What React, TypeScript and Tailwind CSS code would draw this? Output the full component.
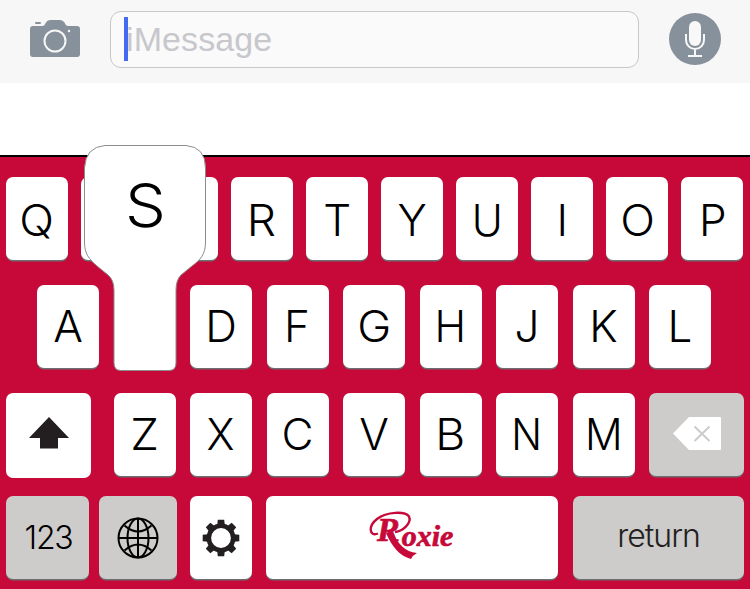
import type { ReactNode } from "react";

const letterKey =
  "flex h-[83px] w-[62px] shrink-0 items-center justify-center rounded-[7px] bg-white text-[44px] leading-none font-light text-black shadow-[0_1.5px_0_#6d6e70]";

type Glyph = { char: string; scale?: number; dx?: number; dy?: number };

function Letter({ char, scale = 1, dx = 0, dy = 0 }: Glyph) {
  return (
    <span className="block" style={{ transform: `translate(${dx}px, ${dy}px) scaleX(${scale})` }}>
      {char}
    </span>
  );
}

const topRow: Glyph[] = [
  { char: "Q", scale: 1.04 }, { char: "W" }, { char: "E" }, { char: "R", scale: 1.05, dx: -0.5 }, { char: "T" },
  { char: "Y" }, { char: "U", scale: 0.96 }, { char: "I" }, { char: "O", scale: 1.04 }, { char: "P", dx: 0.5 },
];
const homeRow: Glyph[] = [
  { char: "A" }, { char: "S" }, { char: "D" }, { char: "F", dx: -0.5 }, { char: "G", scale: 1.04 },
  { char: "H", scale: 0.97 }, { char: "J" }, { char: "K" }, { char: "L" },
];
const bottomRow: Glyph[] = [
  { char: "Z", scale: 1.05 }, { char: "X", scale: 0.96 }, { char: "C" }, { char: "V" },
  { char: "B", scale: 1.05 }, { char: "N", scale: 0.92 }, { char: "M", scale: 0.95 },
];
const covered = ["W", "E"];

function GrayKey({ className, children }: { className: string; children: ReactNode }) {
  return (
    <div className={`flex h-[83px] shrink-0 items-center justify-center rounded-[7px] bg-[#cdccca] shadow-[0_1.5px_0_#6d6e70] ${className}`}>
      {children}
    </div>
  );
}

function Camera() {
  return (
    <svg className="h-[38px] w-[50px]" viewBox="0 0 50 38">
      <path d="M3 6H13Q15 5 16 2.5Q17 0 20 0H30Q33 0 34.5 2.5Q36 6 38 6H47Q50 6 50 9V34Q50 37 47 37H3Q0 37 0 34V9Q0 6 3 6Z" fill="#87919b" />
      <rect x="5" y="2" width="6" height="2" rx="1" fill="#87919b" />
      <circle cx="25" cy="21" r="10.5" fill="none" stroke="#f7f7f7" strokeWidth="2" />
      <circle cx="39" cy="11" r="1.2" fill="#f7f7f7" />
    </svg>
  );
}

function Microphone() {
  return (
    <svg className="h-[52px] w-[52px]" viewBox="0 0 52 52">
      <circle cx="26" cy="26" r="26" fill="#87919b" />
      <rect x="20" y="8" width="12" height="25" rx="6" fill="#f8f8f8" />
      <path d="M17 21V27A9 9 0 0 0 35 27V21M26 36V43M19 43H33" fill="none" stroke="#f8f8f8" strokeWidth="2" />
    </svg>
  );
}

function Globe() {
  return (
    <svg className="h-[42px] w-[42px]" viewBox="0 0 42 42" fill="none" stroke="#000" strokeWidth="2">
      <circle cx="21" cy="21" r="19.5" />
      <ellipse cx="21" cy="21" rx="10.5" ry="19.5" />
      <path d="M21 1.5V40.5M1.5 21H40.5M7.500 8.500Q21 20.500 34.500 8.500M7.500 33.500Q21 21.500 34.500 33.500" />
    </svg>
  );
}

const teeth = [0, 45, 90, 135, 180, 225, 270, 315];

function Gear() {
  return (
    <svg className="h-[38px] w-[38px]" viewBox="-19 -19 38 38">
      <circle r="12.2" fill="none" stroke="#231f20" strokeWidth="4.600" />
      {teeth.map((a) => (
        <path key={a} d="M-3.800 -13L-3.200 -18.3H3.2L3.800 -13Z" fill="#231f20" transform={`rotate(${a})`} />
      ))}
    </svg>
  );
}

function Logo() {
  return (
    <svg className="h-[50px] w-[90px] overflow-visible" viewBox="0 0 90 50" fill="#c60939">
      <text x="10" y="28" fontFamily="Liberation Serif, serif" fontWeight="700" fontStyle="italic" fontSize="34" stroke="#c60939" strokeWidth="0.700">
        R<tspan dx="2" dy="4.500" fontSize="30">oxie</tspan>
      </text>
      <path d="M11 20.500C2 24 1 13 10 6C20 -1.500 38 -2 42 3.500C45 10 36 18 28 19" fill="none" stroke="#c60939" strokeWidth="2.400" />
      <path d="M25 18C31 31 38 39 50 40Q46 42 44 46C33 43 25 34 19 20Z" />
    </svg>
  );
}

function KeyPopup() {
  return (
    <div className="pointer-events-none absolute -top-[141px] -left-[30px] h-[228px] w-[123px]">
      <svg className="block h-full w-full" viewBox="0 0 123 228">
        <path
          d="M21 1.5H102Q121.500 3 121.500 24V98C121.500 111 116 116 108 122L97 131Q92 136 92 146V219Q92 226.500 85 226.500H37Q30 226.500 30 219V146Q30 136 24 131L13 122C5 115 0.500 110 0.500 98V24Q1.500 3 21 1.500Z"
          fill="#fff" stroke="#8c8c8c" strokeWidth="1"
        />
      </svg>
      <div className="absolute inset-x-0 top-[31px] scale-x-108 text-center text-[60px] leading-[60px] font-light">S</div>
    </div>
  );
}

export default function App() {
  return (
    <div className="flex h-[589px] w-[750px] flex-col overflow-hidden bg-white font-['Inter',sans-serif] text-black">
      <header className="flex h-[83px] shrink-0 items-start bg-[#f7f7f7] pl-[30px]">
        <div className="mt-5"><Camera /></div>
        <div className="mt-[11px] ml-[30px] flex h-[57px] w-[529px] items-start rounded-[11px] border border-[#c7c7cc] bg-[#fafafa] pl-[13px]">
          <span className="mt-[5px] h-11 w-1 bg-[#426bf2]" />
          <span className="mt-[7px] -ml-[2px] font-['Liberation_Sans',sans-serif] text-[34px] leading-[40px] tracking-[0.1px] text-[#c7c7cc]">iMessage</span>
        </div>
        <div className="mt-[13px] ml-[30px]"><Microphone /></div>
      </header>

      <main className="mt-[72px] flex grow flex-col border-t-2 border-black bg-[#c60939] pt-[20px]">
        <div className="flex gap-[13.06px] pl-[6px]">
          {topRow.map((k) => (
            <div key={k.char} className={letterKey}>{!covered.includes(k.char) && <Letter {...k} dy={0.5} />}</div>
          ))}
        </div>
        <div className="mt-[25px] flex gap-[14.5px] pl-[37px]">
          {homeRow.map((k) => (
            <div key={k.char} className={`${letterKey} relative`}>
              {k.char === "S" ? <KeyPopup /> : <Letter {...k} dy={-1} />}
            </div>
          ))}
        </div>
        <div className="mt-[25px] flex pl-[6px]">
          <div className="flex h-[85px] w-[85px] items-center justify-center rounded-[7px] bg-white pb-[5px]">
            <svg className="h-[32px] w-[40px]" viewBox="0 0 40 32"><path d="M20 0L40 21H29V31.500H11V21H0Z" fill="#231f20" /></svg>
          </div>
          <div className="ml-[22.500px] flex gap-[14.5px]">
            {bottomRow.map((k) => (
              <div key={k.char} className={letterKey}><Letter {...k} dy={-1} /></div>
            ))}
          </div>
          <GrayKey className="ml-[14.500px] w-[95px]">
            <svg className="mb-[3px] h-[33px] w-[48px]" viewBox="0 0 48 33">
              <path d="M16 0H47Q48 0 48 1V32Q48 33 47 33H16L0 16.500Z" fill="#fff" />
              <path d="M21.500 9.500L36.500 24M36.500 9.500L21.500 24" stroke="#cdccca" strokeWidth="2" />
            </svg>
          </GrayKey>
        </div>
        <div className="mt-[18px] flex pl-[6px]">
          <GrayKey className="w-[83px]"><span className="pl-[2px] text-[32px] font-light tracking-[-1.2px]">123</span></GrayKey>
          <GrayKey className="ml-[10px] w-[78px]"><Globe /></GrayKey>
          <div className={`${letterKey} ml-[13px]`}><Gear /></div>
          <div className="ml-[14px] flex h-[83px] w-[292px] items-center justify-center rounded-[7px] bg-white shadow-[0_1.5px_0_#6d6e70]"><Logo /></div>
          <GrayKey className="ml-[15px] w-[171px]"><span className="pb-[4px] text-[32px] font-light tracking-[-1px] text-[#231f20]">return</span></GrayKey>
        </div>
      </main>
    </div>
  );
}
